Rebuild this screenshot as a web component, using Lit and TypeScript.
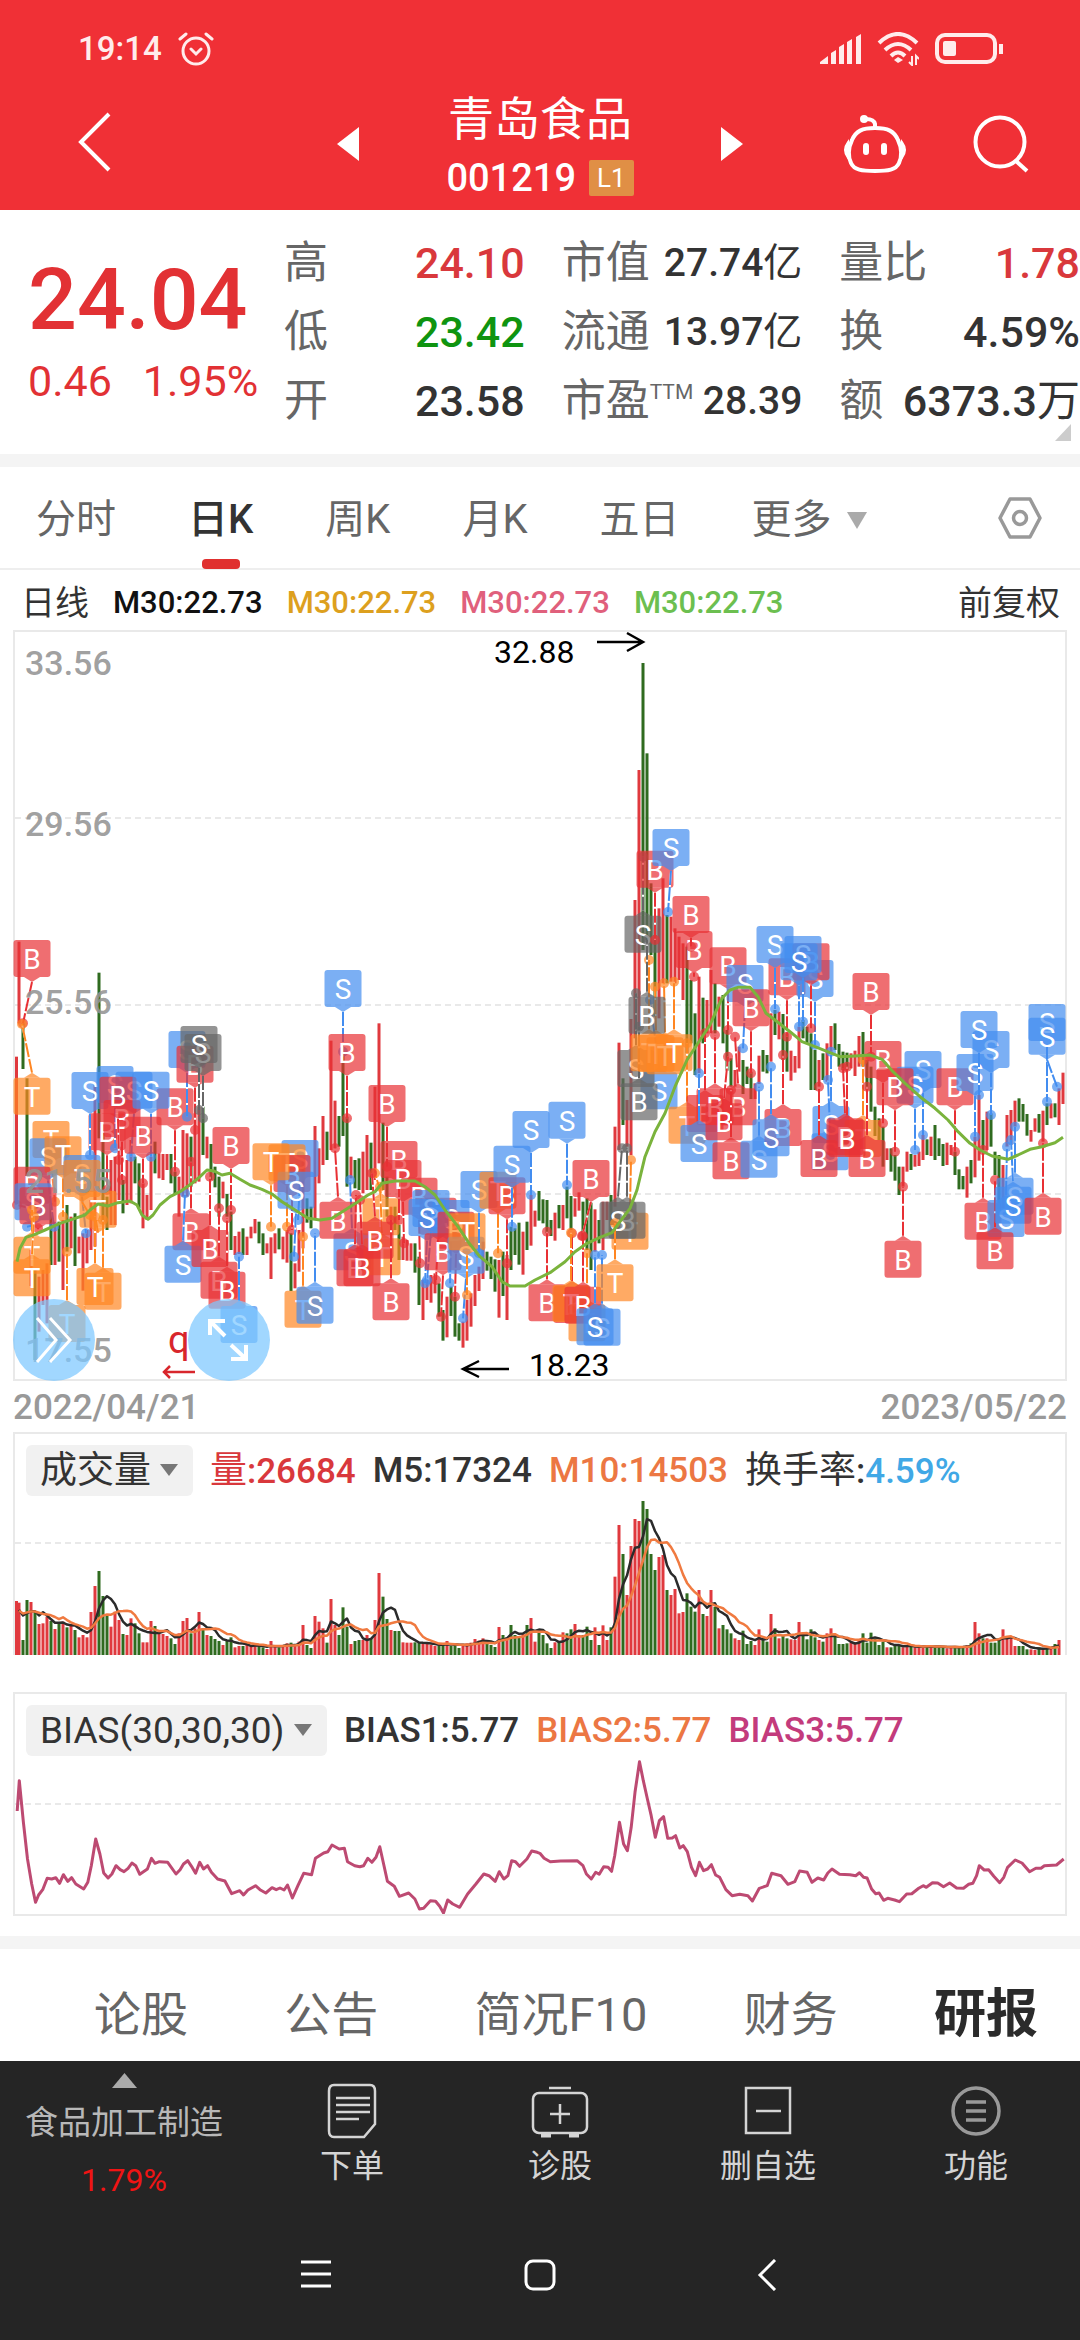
import { LitElement, html, svg, css } from "lit";
import { customElement, property } from "lit/decorators.js";

/* One daily bar per entry: colour, high and low, in thirds of a unit below the 270 line. */
const BARS =
  "r125,370 g370,507 g535,850 r1050,1158 g1110,1380 r1130,1295 r1110,1215 r1090,1270 g910,1095 r980,1095 g965,1085 r960,1170 g915,1055 r950,1045 g940,1098 r1010,1060 r1000,1172 r990,1090 r900,1050 r555,1040 g218,715 g695,965 g890,990 r780,975 r770,975 r740,900 g840,940 r780,915 r720,910 g770,850 g790,925 r850,985 r885,960 r770,930 g725,820 r760,835 r762,840 r762,810 g762,850 g815,882 r830,950 r690,890 r700,890 g710,860 r640,850 r620,845 g620,765 r710,775 g732,840 g800,862 g830,950 r845,895 g882,950 g935,1050 r1008,1065 r995,1062 g985,1065 r1010,1065 r980,1015 r957,1000 g965,1030 g1000,1065 r1030,1060 r1012,1137 r1000,1060 g985,1048 r1010,1078 r990,1088 g1000,1173 r1090,1165 r990,1115 r785,1045 g895,968 g920,985 r678,955 r745,850 r648,795 g695,780 r422,750 r602,745 g648,740 g460,708 g650,860 r770,835 g780,865 g775,870 " +
  "r755,880 r705,870 g728,870 r560,840 r370,790 g668,870 g830,950 r920,960 g920,990 g975,1080 r1010,1080 r1020,1082 r1030,1082 g1030,1118 g1070,1215 r1140,1260 r1140,1200 r1125,1208 r1120,1180 g1150,1250 g1230,1322 r1190,1312 g1160,1248 g1190,1310 g1270,1322 r1265,1343 r1200,1322 r1180,1280 r1125,1218 r1100,1173 r1025,1137 g1055,1112 g1070,1137 g1078,1175 r1080,1253 g1055,1188 r1065,1260 g980,1110 g985,1065 g968,1094 r995,1124 g965,1050 r885,1037 r932,980 g873,962 g898,970 g900,1000 g960,1008 r938,1022 g915,985 r915,990 g860,955 g888,990 r895,950 r877,932 g905,1020 g895,1050 g908,1110 r928,1055 g960,1030 r905,1050 r905,960 g885,1000 r680,920 r428,750 g535,675 r600,740 r357,765 r0,415 r-390,390 g-711,150 g-440,120 g-50,165 g105,350 r25,355 r-65,250 g45,250 r50,245 r85,250 r110,240 r130,300 g140,460 g240,430 g340,525 r230,520 g293,430 r300,400 r210,400 g250,400 r290,380 " +
  "g285,430 g390,512 g475,560 r510,560 r440,515 g480,582 g500,552 g515,597 r550,597 r467,552 g450,515 g465,520 r340,485 g330,405 r335,418 g342,480 g400,515 r452,542 r468,518 r380,505 g360,415 g380,430 g400,570 g450,570 r480,560 g460,540 r430,545 r378,460 g370,450 g432,500 g455,510 g458,510 r460,505 r452,528 r408,500 g396,500 g480,570 g500,635 g620,708 g655,720 g680,800 r745,780 g745,815 g765,842 g800,885 r800,860 r755,815 g762,810 r765,800 r755,798 r705,780 g718,765 r710,768 g675,780 g715,768 g732,798 r728,795 r735,765 g755,825 g808,868 g828,868 r800,893 g780,850 r710,832 r585,782 g660,750 r635,750 g640,740 g755,825 g765,928 r795,925 r645,740 r630,735 r602,680 g595,665 g612,665 g642,707 r690,725 r655,695 g642,698 r632,725 g610,675 r610,655 g610,652 r565,675 r518,612";

/* Volume of each bar, as the height of its column in thirds of a unit. */
const VOLUMES = [
  548, 660, 540, 546, 575, 612, 610, 590, 603, 627, 612, 605, 622, 612, 630, 652, 645, 652, 576, 498, 453, 528, 588, 620,
  575, 600, 642, 645, 595, 610, 640, 667, 667, 603, 618, 642, 642, 648, 655, 672, 640, 603, 594, 640, 625, 576, 625, 645,
  648, 657, 663, 675, 663, 652, 682, 678, 678, 675, 676, 676, 681, 682, 687, 663, 680, 682, 678, 670, 668, 678, 665, 615,
  675, 684, 588, 605, 625, 668, 537, 615, 645, 562, 620, 672, 663, 660, 660, 645, 655, 600, 459, 530, 597, 630, 633, 633,
  667, 668, 668, 667, 667, 672, 670, 675, 678, 676, 672, 663, 678, 675, 684, 672, 670, 668, 657, 662, 655, 672, 675, 681,
  621, 645, 652, 615, 645, 650, 640, 615, 594, 665, 630, 645, 670, 684, 667, 665, 637, 640, 628, 612, 645, 645, 620, 660,
  622, 675, 616, 660, 622, 470, 315, 402, 525, 378, 297, 303, 243, 267, 402, 450, 411, 405, 510, 525, 507, 580, 576, 520,
  560, 575, 510, 582, 588, 510, 560, 625, 615, 628, 640, 655, 660, 632, 672, 663, 675, 628, 655, 665, 582, 625, 655, 648,
  655, 658, 660, 606, 645, 658, 628, 652, 660, 665, 640, 625, 648, 672, 672, 670, 668, 670, 660, 640, 668, 638, 655, 675,
  665, 682, 682, 672, 675, 682, 680, 678, 682, 680, 679, 680, 681, 678, 679, 682, 685, 680, 678, 684, 680, 676, 670, 606,
  640, 655, 655, 668, 668, 655, 628, 655, 655, 678, 678, 678, 688, 688, 690, 682, 684, 684, 680, 672, 660,
].map((v) => 705 - v);

const MA30 =
  "17,1085 20,1045 26,1012 35,1003 45,990 60,970 75,955 85,945 90,930 98,912 108,918 118,908 130,903 137,915 142,945 148,958 153,945 160,915 170,890 180,875 192,850 200,830 207,810 214,813 222,825 230,820 240,838 250,855 262,868 272,882 282,905 295,930 308,955 320,960 332,955 345,930 358,905 368,885 375,875 382,850 395,843 415,843 425,860 435,885 445,930 458,980 468,1025 480,1070 492,1100 502,1145 510,1158 525,1158 535,1140 550,1118 565,1085 575,1055 587,1030 600,1012 612,998 620,965 630,925 637,870 645,770 655,695 665,640 675,560 687,480 700,420 710,375 718,320 722,295 730,270 738,262 750,262 758,290 766,340 775,360 790,395 802,425 815,440 830,458 840,470 855,468 870,465 882,478 893,515 905,550 920,590 935,625 948,660 958,695 970,730 980,750 992,768 1008,778 1018,765 1030,748 1042,740 1055,728 1063,712";

const BIAS =
  "50,1176 56,1085 68,1210 80,1320 92,1395 103,1450 112,1428 124,1412 137,1378 150,1380 162,1376 173,1393 184,1367 197,1387 208,1376 220,1395 243,1410 255,1390 265,1340 278,1260 290,1305 301,1362 314,1377 325,1365 337,1340 349,1352 360,1358 372,1348 383,1332 394,1340 406,1366 428,1350 440,1318 450,1333 463,1328 487,1330 511,1365 523,1352 533,1335 545,1325 556,1342 568,1363 580,1330 591,1350 603,1340 614,1360 632,1380 653,1386 673,1424 696,1415 707,1428 720,1413 742,1400 755,1412 772,1422 790,1406 802,1412 813,1407 825,1413 835,1398 849,1437 865,1400 882,1363 905,1367 916,1318 940,1302 952,1298 964,1278 985,1290 1000,1288 1009,1328 1030,1340 1045,1343 1056,1340 1068,1318 1080,1330 1092,1315 1103,1283 1115,1340 1125,1387 1145,1402 1160,1432 1187,1422 1205,1440 1218,1470 1230,1468 1250,1445 1265,1447 1277,1462 1288,1482 1300,1443 1315,1455 1335,1465 1358,1425 1382,1395 1405,1365 1420,1370 1438,1387 1450,1358 1463,1380 1475,1370 1486,1325 1497,1328 1509,1342 1530,1320 1544,1296 1560,1300 " +
  "1568,1303 1580,1318 1598,1328 1628,1326 1676,1325 1693,1340 1703,1365 1717,1380 1730,1360 1740,1366 1753,1343 1766,1345 1776,1357 1785,1310 1799,1210 1811,1275 1822,1295 1833,1225 1844,1120 1857,1028 1868,1085 1880,1140 1891,1190 1903,1255 1915,1205 1927,1193 1939,1258 1952,1257 1962,1250 1974,1287 1984,1280 1996,1298 2008,1345 2020,1370 2031,1330 2043,1355 2055,1350 2066,1337 2078,1368 2090,1375 2108,1412 2126,1430 2148,1426 2172,1430 2185,1446 2205,1408 2228,1400 2241,1363 2268,1370 2288,1396 2308,1388 2322,1356 2344,1360 2358,1390 2375,1377 2392,1383 2404,1362 2416,1350 2438,1366 2468,1367 2485,1370 2496,1361 2508,1375 2518,1377 2531,1410 2543,1424 2553,1422 2566,1444 2578,1438 2598,1443 2612,1448 2633,1425 2648,1424 2668,1408 2681,1400 2690,1405 2708,1391 2723,1392 2740,1403 2758,1392 2778,1407 2798,1408 2813,1396 2825,1393 2836,1370 2844,1340 2858,1353 2871,1352 2886,1372 2903,1391 2915,1375 2926,1345 2948,1323 2968,1332 2990,1358 3008,1348 3023,1348 3033,1340 3068,1338 3089,1320";

/* Trade flags: letter (lower case = grey), box centre x, box top, dot x, dot y. */
const FLAGS =
  "B32,120,23,370 T32,533,22,372 T51,663,55,905 S48,715,54,980 T63,709,63,950 S82,765,86,1000 T82,780,90,945 B32,800,17,915 S33,850,27,980 B38,862,38,985 T32,1010,32,930 T32,1078,34,950 T67,1215,67,1055 B107,640,107,870 S90,516,90,765 S115,498,115,745 S134,515,131,770 B122,600,122,840 B118,530,119,780 B175,565,175,815 S151,515,151,770 B143,650,143,850 T98,872,95,945 T103,1118,103,960 T95,1104,95,950 " +
  "S187,393,187,650 B195,437,195,690 s203,402,203,655 s199,378,199,630 B231,681,231,930 B191,940,191,785 S183,1037,185,880 B210,990,210,830 B219,1085,219,925 B227,1115,227,955 S239,1218,239,1070 S300,720,298,960 T287,733,287,980 B292,765,292,990 S296,815,294,1070 T271,730,271,980 T303,1172,303,1010 S315,1160,315,1000 " +
  "S343,210,343,455 B347,402,347,655 S352,1000,350,840 B355,1048,356,885 T381,895,375,820 T382,1015,380,860 B362,1048,360,900 B338,905,335,745 B387,555,387,800 B399,723,399,960 B403,780,404,1030 B375,965,372,820 B391,1150,391,960 " +
  "B419,833,420,1090 B438,893,436,1140 S451,900,450,1150 S431,870,427,1140 S427,897,425,1150 B456,935,455,1190 B443,1000,441,1250 S466,1010,463,1255 T467,940,467,1185 S479,813,479,1060 T498,815,498,1060 B507,832,507,1090 S512,737,512,980 S531,633,531,885 S567,605,567,855 B591,780,582,1008 B547,1153,547,995 B572,1158,572,1000 T571,1155,571,998 T587,1213,587,1060 B583,1160,583,1008 S602,1226,602,1065 S595,1225,595,1065 " +
  "T630,938,631,780 b627,905,627,745 s618,905,622,745 T615,1093,615,970 s643,47,643,-130 S659,517,650,300 s636,450,636,280 b639,550,639,380 T649,403,649,180 T656,405,655,260 T665,412,664,250 b647,290,647,120 T674,403,674,245 " +
  "B655,-148,655,120 S671,-213,668,36 B694,93,694,230 B691,-12,691,140 B728,142,728,390 S745,195,743,445 B751,268,751,520 B738,565,735,410 T687,620,687,430 B705,585,705,400 B715,565,715,405 S699,675,699,520 B724,610,728,470 B731,727,731,570 S759,722,759,560 B783,627,783,465 S771,658,771,500 " +
  "B787,175,787,410 S775,78,775,327 S815,180,815,435 B811,130,811,385 S803,108,803,365 S799,130,799,380 B871,219,871,470 S830,700,828,540 S831,618,831,455 B819,720,819,560 T863,660,863,480 B867,720,867,560 B845,655,843,505 B847,660,847,500 " +
  "B883,423,883,670 S923,453,923,705 S915,500,915,750 B895,505,895,755 B955,505,955,755 B903,1022,903,860 S991,393,991,645 S975,462,975,710 S979,333,979,585 B983,908,983,750 S1006,900,1007,740 B995,997,995,840 S1015,833,1015,680 S1013,860,1011,720 B1043,893,1043,730 S1047,312,1047,605 S1047,353,1057,560";

const RED = "#e0393e";
const GREEN = "#2f6b1f";
const FLAG_COLOURS: Record<string, string> = { B: "#e83034", S: "#438df0", T: "#ff8622" };

const barX = (i: number) => 19 + i * 4;
const priceY = (v: number) => 270 + v / 3;

const bars = BARS.split(" ").map((entry) => {
  const [high, low] = entry.slice(1).split(",").map(Number);
  return { colour: entry[0] === "r" ? RED : GREEN, high, low };
});

const flags = FLAGS.split(" ").map((entry) => {
  const [x, top, dotX, dotY] = entry.slice(1).split(",").map(Number);
  const letter = entry[0].toUpperCase();
  const colour = entry[0] === letter ? FLAG_COLOURS[letter] : "#666666";
  return { letter, colour, x, top: priceY(top), dotX, dotY: priceY(dotY) };
});

const points = (data: string, fx: (x: number) => number, fy: (y: number) => number) =>
  data
    .split(" ")
    .map((p) => p.split(",").map(Number))
    .map(([x, y]) => `${fx(x).toFixed(1)},${fy(y).toFixed(1)}`)
    .join(" ");

const average = (span: number) =>
  VOLUMES.map((_, i) => {
    const part = VOLUMES.slice(Math.max(0, i - span + 1), i + 1);
    const padded = [...part, ...Array(span - part.length).fill(130)];
    return padded.reduce((a, b) => a + b, 0) / span;
  })
    .map((v, i) => `${barX(i)},${(159 - v / 3).toFixed(1)}`)
    .join(" ");

@customElement("price-chart")
class PriceChart extends LitElement {
  static styles = css`
    :host { display: block; position: relative; }
    svg { display: block; width: 100%; height: auto; overflow: visible; }
    .frame { border: 2px solid #e9e9e9; }
    .axis { font: 500 34px Roboto, sans-serif; fill: #949494; fill-opacity: 0.9; }
    .mark { font: 400 32px Roboto, sans-serif; fill: #000; }
    .event { font: 400 38px Roboto, sans-serif; fill: #d8262c; }
    .letter { font: 400 28px Roboto, sans-serif; fill: #fff; text-anchor: middle; }
    .round {
      position: absolute; bottom: 0; width: 82px; height: 82px; padding: 0; border: 0;
      border-radius: 50%; background: rgba(125, 200, 255, 0.72);
    }
    .round.more { left: 0; }
    .round.expand { left: 175px; }
  `;

  private flag(f: (typeof flags)[number]) {
    const below = f.dotY > f.top;
    const edge = below ? f.top + 37 : f.top;
    const tip = below ? edge + 5 : edge - 5;
    return svg`
      <line x1=${f.x} y1=${tip} x2=${f.dotX} y2=${f.dotY} stroke="#fff" stroke-width="2"></line>
      <line x1=${f.x} y1=${tip} x2=${f.dotX} y2=${f.dotY} stroke=${f.colour} stroke-width="2" stroke-dasharray="14 2"></line>
      <circle cx=${f.dotX} cy=${f.dotY} r="5" fill=${f.colour} fill-opacity="0.7"></circle>
      <g fill=${f.colour} fill-opacity="0.7">
        <rect x=${f.x - 18.5} y=${f.top} width="37" height="37" rx="3"></rect>
        <path d="M${f.x - 8} ${edge}L${f.x} ${tip}L${f.x + 8} ${edge}Z"></path>
      </g>
      <text class="letter" x=${f.x} y=${f.top + 29}>${f.letter}</text>`;
  }

  render() {
    const grid = [188, 375, 564];
    const axis: [string, number][] = [["33.56", 45], ["29.56", 206], ["25.56", 384], ["21.55", 563], ["17.55", 732]];
    return html`
      <div class="frame">
        <svg viewBox="15 2 1050 747" role="img" aria-label="日K线图">
          ${grid.map((y) => svg`<line x1="15" x2="1065" y1=${y} y2=${y} stroke="#e9e9e9" stroke-width="2" stroke-dasharray="6 4"></line>`)}
          <rect x="15" y=${priceY(470)} width="3" height="148" fill=${RED}></rect>
          ${bars.map((b, i) => svg`<rect x=${barX(i) - 1.5} y=${priceY(b.high)} width="3" height=${(b.low - b.high) / 3} fill=${b.colour}></rect>`)}
          ${flags.map((f) => this.flag(f))}
          ${axis.map(([label, y]) => svg`<text class="axis" x="25" y=${y}>${label}</text>`)}
          <polyline points=${points(MA30, (x) => x, priceY)} fill="none" stroke="#7ab33c" stroke-width="3" stroke-linejoin="round"></polyline>
          <text class="mark" x="494" y="33">32.88</text>
          <path d="M597 12H643M627 3L643 12L627 21" fill="none" stroke="#000" stroke-width="2.5"></path>
          <text class="mark" x="529" y="746">18.23</text>
          <path d="M509 739H463M479 731L463 739L479 747" fill="none" stroke="#000" stroke-width="2.5"></path>
          <text class="event" x="168" y="723">q</text>
          <path d="M195 742H164M170 736L164 742L170 748" fill="none" stroke="#d8262c" stroke-width="2.5"></path>
        </svg>
      </div>
      <button class="round more" aria-label="展开">
        <svg viewBox="0 0 82 82"><path d="M24 19L43 41L24 63M37 19L57 41L37 63" fill="none" stroke="#fff" stroke-width="3"></path></svg>
      </button>
      <button class="round expand" aria-label="全屏">
        <svg viewBox="0 0 82 82"><path d="M37 37L22 22M22 36V22H37M43 46L58 60M43 60H58V46" fill="none" stroke="#fff" stroke-width="4"></path></svg>
      </button>
    `;
  }
}

@customElement("indicator-panel")
class IndicatorPanel extends LitElement {
  @property() name = "";

  static styles = css`
    :host { display: block; border: 2px solid #e9e9e9; color: #333; }
    .head {
      display: flex; align-items: center; gap: 17px; height: 51px; padding: 11px 11px 0;
      font: 500 35px/51px Roboto, "Noto Sans CJK SC", sans-serif; white-space: nowrap;
    }
    .pick { position: relative; display: flex; }
    select {
      appearance: none; height: 51px; padding: 0 42px 0 14px; border: 0; border-radius: 6px;
      background: #f1f1f1; color: #333; font: 400 37px/51px Roboto, "Noto Sans CJK SC", sans-serif;
    }
    .pick svg { position: absolute; right: 15px; top: 19px; width: 18px; height: 12px; pointer-events: none; }
  `;

  render() {
    return html`
      <div class="head">
        <label class="pick">
          <select aria-label="指标"><option>${this.name}</option></select>
          <svg viewBox="0 0 18 12"><path d="M0 0H18L9 12Z" fill="#777"></path></svg>
        </label>
        <slot></slot>
      </div>
      <slot name="plot"></slot>
    `;
  }
}

@customElement("app-root")
class AppRoot extends LitElement {
  static styles = css`
    :host {
      display: block; min-height: 100vh; background: #fff; color: #333;
      font-family: Roboto, "Noto Sans CJK SC", sans-serif;
    }
    * { box-sizing: border-box; }
    button { margin: 0; padding: 0; border: 0; background: none; color: inherit; font: inherit; line-height: inherit; }
    a { color: inherit; text-decoration: none; }
    svg { display: block; }

    .top { background: #f03036; color: #fff; }
    .status {
      display: flex; align-items: center; gap: 16px; height: 70px; padding: 28px 76px 0 78px;
      font-size: 33px; line-height: 42px; font-weight: 500; color: #ffecec;
    }
    .status .push { margin-left: auto; }
    .bar { display: grid; grid-template-columns: 1fr auto 1fr; align-items: center; height: 140px; padding: 8px 50px 0; }
    .back { padding-left: 27px; }
    .stock { display: flex; align-items: center; justify-content: center; gap: 87px; }
    .title { padding-top: 8px; }
    .name { text-align: center; font-size: 46px; line-height: 60px; }
    .code { display: flex; align-items: center; justify-content: center; gap: 13px; font-size: 38px; line-height: 58px; font-weight: 500; }
    .level { padding: 0 8px; background: #e08f45; border-radius: 2px; font-size: 26px; line-height: 36px; font-weight: 400; }
    .tools { display: flex; justify-content: flex-end; align-items: center; gap: 64px; }

    .quote {
      position: relative; display: grid; grid-template-columns: 219px repeat(3, 1fr); column-gap: 37px;
      padding: 19px 0 18px 28px; border-bottom: 13px solid #f4f4f4; font-size: 43px; line-height: 69px;
    }
    .price { padding-top: 28px; color: #e23134; white-space: nowrap; }
    .last { font-size: 86px; line-height: 86px; font-weight: 500; }
    .change { display: flex; gap: 31px; margin-top: 13px; font-size: 43px; line-height: 50px; }
    .facts { margin: 0; }
    .fact { display: flex; justify-content: space-between; height: 69px; white-space: nowrap; }
    .fact dt { color: #666; font-size: 44px; font-weight: 400; }
    .fact dd { margin: 0; font-weight: 500; }
    .fact sup { font-size: 21px; line-height: 21px; vertical-align: 17px; }
    .cn { font-weight: 400; }
    .mid dd { font-size: 39px; }
    .up { color: #d9383c; }
    .down { color: #0f9410; }
    .corner { position: absolute; right: 9px; bottom: 13px; width: 16px; height: 17px; }

    .periods {
      display: flex; align-items: stretch; height: 103px; padding: 0 38px 0 36px;
      border-bottom: 2px solid #eee; font-size: 40px; line-height: 60px; color: #666;
    }
    .periods .list { display: flex; gap: 72px; }
    .periods .list button { padding-top: 5px; }
    .periods .on { position: relative; color: #333; font-weight: 500; }
    .periods .on::after {
      content: ""; position: absolute; left: 50%; bottom: -1px; width: 38px; height: 10px;
      margin-left: -19px; border-radius: 4px; background: #e0302f;
    }
    .periods .more { display: flex; align-items: center; gap: 15px; }
    .periods .set { margin-left: auto; align-self: center; }

    .averages {
      display: flex; align-items: center; gap: 24px; height: 60px; padding: 6px 20px 0 21px;
      font-size: 31px; line-height: 50px; font-weight: 500; white-space: nowrap;
    }
    .averages .label { font-size: 34px; font-weight: 400; }
    .averages .push { margin-left: auto; font-size: 34px; font-weight: 400; }
    .black { color: #111; }
    .gold { color: #dda01e; }
    .pink { color: #e0607c; }
    .lime { color: #6cbf50; }
    .orange { color: #ec7743; }
    .blue { color: #40a8e6; }
    .plum { color: #c33b7c; }

    .charts { padding: 0 13px 20px; }
    .charts .cn { font-size: 37px; }
    .dates {
      display: flex; justify-content: space-between; height: 51px; padding-top: 2px;
      font-size: 35px; line-height: 50px; font-weight: 500; color: #999;
    }
    .plot { width: 100%; height: auto; }
    .gap { height: 37px; }
    .volume { border-bottom: 0; }

    .sections {
      display: flex; align-items: center; justify-content: space-between; height: 125px;
      padding: 20px 42px 0 94px; border-top: 13px solid #f4f4f4; font-size: 47px; line-height: 60px; color: #666;
      white-space: nowrap;
    }
    .sections .on { font-size: 52px; font-weight: 700; color: #2b2b2b; }

    .dock {
      display: grid; grid-template-columns: 248fr repeat(4, 208fr); height: 149px;
      background: #252525; color: #d4d4d4; font-size: 32px; line-height: 40px;
    }
    .dock > * { display: flex; flex-direction: column; align-items: center; justify-content: flex-start; text-align: center; }
    .industry { padding-top: 12px; font-size: 33px; }
    .industry span { margin-top: 15px; white-space: nowrap; color: #b8b8b8; }
    .industry .rate { margin-top: 17px; font-size: 32px; color: #f01414; }
    .dock .item { padding-top: 20px; gap: 5px; }
    .system {
      display: flex; justify-content: center; align-items: center; gap: 193px;
      height: 130px; background: #252525;
    }
  `;

  private grid(y: number) {
    return svg`<line x1="15" x2="1065" y1=${y} y2=${y} stroke="#e9e9e9" stroke-width="2" stroke-dasharray="6 4"></line>`;
  }

  render() {
    return html`
      <header class="top">
        <div class="status">
          <span>19:14</span>
          <svg width="36" height="36" viewBox="0 0 36 36" fill="none" stroke="#ffecec" stroke-width="3" stroke-linecap="round">
            <circle cx="18" cy="20" r="13"></circle><path d="M2 8L8 3M34 8L28 3M13 18L18 23L23 18"></path>
          </svg>
          <svg class="push" width="41" height="30" viewBox="0 0 41 30" fill="#ffecec">
            <path d="M0 30V28L8 22V30ZM11 30V19L16 16V30ZM19 30V13L24 10V30ZM27 30V8L32 5V30ZM36 30V3L41 0V30Z"></path>
          </svg>
          <svg width="42" height="34" viewBox="0 0 42 34" fill="none" stroke="#ffecec" stroke-width="4">
            <path d="M2 11Q21 -7 40 11M8 18Q21 6 34 18M14 24Q21 17 28 24"></path>
            <path d="M21 25L26 28L21 31L17 28Z" fill="#ffecec" stroke="none"></path>
            <path d="M35 24V33L32 30M39 33V24L42 27" stroke-width="2"></path>
          </svg>
          <svg width="69" height="32" viewBox="0 0 69 32" fill="none" stroke="#ffecec" stroke-width="4">
            <rect x="2" y="2" width="58" height="27" rx="8"></rect>
            <rect x="8" y="8" width="13" height="15" rx="2" fill="#ffecec" stroke="none"></rect>
            <path d="M66 11V21"></path>
          </svg>
        </div>
        <div class="bar">
          <div class="back">
            <button aria-label="返回">
              <svg width="36" height="60" viewBox="0 0 36 60" fill="none" stroke="#fff" stroke-width="4"><path d="M32 2L4 30L32 58"></path></svg>
            </button>
          </div>
          <div class="stock">
            <button aria-label="上一只"><svg width="22" height="34" viewBox="0 0 22 34"><path d="M22 0V34L0 17Z" fill="#fff"></path></svg></button>
            <div class="title">
              <div class="name">青岛食品</div>
              <div class="code"><span>001219</span><span class="level">L1</span></div>
            </div>
            <button aria-label="下一只"><svg width="22" height="34" viewBox="0 0 22 34"><path d="M0 0V34L22 17Z" fill="#fff"></path></svg></button>
          </div>
          <div class="tools">
            <button aria-label="助手">
              <svg width="66" height="60" viewBox="0 0 66 60" fill="none" stroke="#fff" stroke-width="4">
                <path d="M33 14C46 14 52 17 56 26C60 34 60 43 57 49C54 56 46 57 33 57C20 57 12 56 9 49C6 43 6 34 10 26C14 17 20 14 33 14Z"></path>
                <path d="M33 14V10Q32 5 24 5"></path>
                <circle cx="22" cy="5" r="4" fill="#fff" stroke="none"></circle>
                <path d="M6 28Q0 36 6 44ZM60 28Q66 36 60 44Z" fill="#fff" stroke-width="2"></path>
                <path d="M24 32V38M42 32V38" stroke-width="6" stroke-linecap="round"></path>
              </svg>
            </button>
            <button aria-label="搜索">
              <svg width="58" height="58" viewBox="0 0 58 58" fill="none" stroke="#fff" stroke-width="4">
                <circle cx="28" cy="27" r="24.5"></circle><path d="M44 46L55 56"></path>
              </svg>
            </button>
          </div>
        </div>
      </header>

      <section class="quote">
        <div class="price">
          <div class="last">24.04</div>
          <div class="change"><span>0.46</span><span>1.95%</span></div>
        </div>
        <dl class="facts">
          <div class="fact"><dt>高</dt><dd class="up">24.10</dd></div>
          <div class="fact"><dt>低</dt><dd class="down">23.42</dd></div>
          <div class="fact"><dt>开</dt><dd>23.58</dd></div>
        </dl>
        <dl class="facts mid">
          <div class="fact"><dt>市值</dt><dd>27.74<span class="cn">亿</span></dd></div>
          <div class="fact"><dt>流通</dt><dd>13.97<span class="cn">亿</span></dd></div>
          <div class="fact"><dt>市盈<sup>TTM</sup></dt><dd>28.39</dd></div>
        </dl>
        <dl class="facts">
          <div class="fact"><dt>量比</dt><dd class="up">1.78</dd></div>
          <div class="fact"><dt>换</dt><dd>4.59%</dd></div>
          <div class="fact"><dt>额</dt><dd>6373.3<span class="cn">万</span></dd></div>
        </dl>
        <svg class="corner" viewBox="0 0 16 17"><path d="M16 0V17H0Z" fill="#ccc"></path></svg>
      </section>

      <nav class="periods">
        <div class="list">
          <button>分时</button>
          <button class="on">日K</button>
          <button>周K</button>
          <button>月K</button>
          <button>五日</button>
          <button class="more">更多<svg width="20" height="17" viewBox="0 0 20 17"><path d="M0 0H20L10 17Z" fill="#aaa"></path></svg></button>
        </div>
        <button class="set" aria-label="设置">
          <svg width="44" height="44" viewBox="0 0 44 44" fill="none" stroke="#999" stroke-width="3.5" stroke-linejoin="round">
            <path d="M12 3H32L42 22L32 41H12L2 22Z"></path><circle cx="22" cy="22" r="6.5"></circle>
          </svg>
        </button>
      </nav>

      <div class="averages">
        <span class="label">日线</span>
        <span class="black">M30:22.73</span>
        <span class="gold">M30:22.73</span>
        <span class="pink">M30:22.73</span>
        <span class="lime">M30:22.73</span>
        <button class="push">前复权</button>
      </div>

      <main class="charts">
        <price-chart></price-chart>
        <div class="dates"><span>2022/04/21</span><span>2023/05/22</span></div>

        <indicator-panel class="volume" name="成交量">
          <span class="up"><span class="cn">量</span>:26684</span>
          <span>M5:17324</span>
          <span class="orange">M10:14503</span>
          <span><span class="cn">换手率</span>:<span class="blue">4.59%</span></span>
          <svg slot="plot" class="plot" viewBox="15 0 1050 159" role="img" aria-label="成交量图">
            ${this.grid(47)}
            <rect x="15" y="105" width="3" height="54" fill=${RED}></rect>
            ${VOLUMES.map((v, i) => svg`<rect x=${barX(i) - 1.5} y=${159 - v / 3} width="3" height=${v / 3} fill=${bars[i].colour}></rect>`)}
            <polyline points=${average(5)} fill="none" stroke="#2b2b2b" stroke-width="2.5" stroke-linejoin="round"></polyline>
            <polyline points=${average(10)} fill="none" stroke="#f07a40" stroke-width="2.5" stroke-linejoin="round"></polyline>
          </svg>
        </indicator-panel>

        <div class="gap"></div>

        <indicator-panel name="BIAS(30,30,30)">
          <span>BIAS1:5.77</span>
          <span class="orange">BIAS2:5.77</span>
          <span class="plum">BIAS3:5.77</span>
          <svg slot="plot" class="plot" viewBox="15 0 1050 158" role="img" aria-label="BIAS图">
            ${this.grid(48)}
            <polyline points=${points(BIAS, (x) => x / 2.904, (y) => (y - 1011) / 3)} fill="none" stroke="#bd4a72" stroke-width="3" stroke-linejoin="round"></polyline>
          </svg>
        </indicator-panel>
      </main>

      <nav class="sections">
        <a href="#discuss">论股</a>
        <a href="#notice">公告</a>
        <a href="#profile">简况F10</a>
        <a href="#finance">财务</a>
        <a href="#report" class="on">研报</a>
      </nav>

      <footer>
        <div class="dock">
          <button class="industry">
            <svg width="25" height="15" viewBox="0 0 25 15"><path d="M12.5 0L25 15H0Z" fill="#aaa"></path></svg>
            <span>食品加工制造</span>
            <span class="rate">1.79%</span>
          </button>
          <button class="item">
            <svg width="50" height="60" viewBox="0 0 50 60" fill="none" stroke="#d4d4d4" stroke-width="2.5">
              <path d="M7 4H43Q48 4 48 10V43L37 56H7Q2 56 2 50V10Q2 4 7 4Z"></path>
              <path d="M9 17H43M9 24H43M9 31H43M9 38H32"></path>
            </svg>
            下单
          </button>
          <button class="item">
            <svg width="60" height="60" viewBox="0 0 60 60" fill="none" stroke="#d4d4d4" stroke-width="2.5">
              <rect x="3" y="12" width="54" height="40" rx="6"></rect>
              <path d="M19 7H41M30 23V43M20 33H40"></path><path d="M11 54H21M39 54H49" stroke-width="5"></path>
            </svg>
            诊股
          </button>
          <button class="item">
            <svg width="50" height="60" viewBox="0 0 50 60" fill="none" stroke="#d4d4d4" stroke-width="2.5">
              <rect x="3" y="7" width="44" height="45"></rect><path d="M13 30H38"></path>
            </svg>
            删自选
          </button>
          <button class="item">
            <svg width="54" height="60" viewBox="0 0 54 60" fill="none" stroke="#999" stroke-width="3.5">
              <circle cx="27" cy="30" r="23"></circle><path d="M17 21H37M17 30H37M17 39H37"></path>
            </svg>
            功能
          </button>
        </div>
        <div class="system">
          <button aria-label="最近任务">
            <svg width="30" height="32" viewBox="0 0 30 32" stroke="#fff" stroke-width="3"><path d="M0 3H30M0 15H30M0 27H30"></path></svg>
          </button>
          <button aria-label="主屏幕">
            <svg width="32" height="32" viewBox="0 0 32 32" fill="none" stroke="#fff" stroke-width="3"><rect x="2" y="2" width="28" height="28" rx="7"></rect></svg>
          </button>
          <button aria-label="返回上级">
            <svg width="30" height="32" viewBox="0 0 30 32" fill="none" stroke="#fff" stroke-width="3"><path d="M26 1L11 16L26 31"></path></svg>
          </button>
        </div>
      </footer>
    `;
  }
}
